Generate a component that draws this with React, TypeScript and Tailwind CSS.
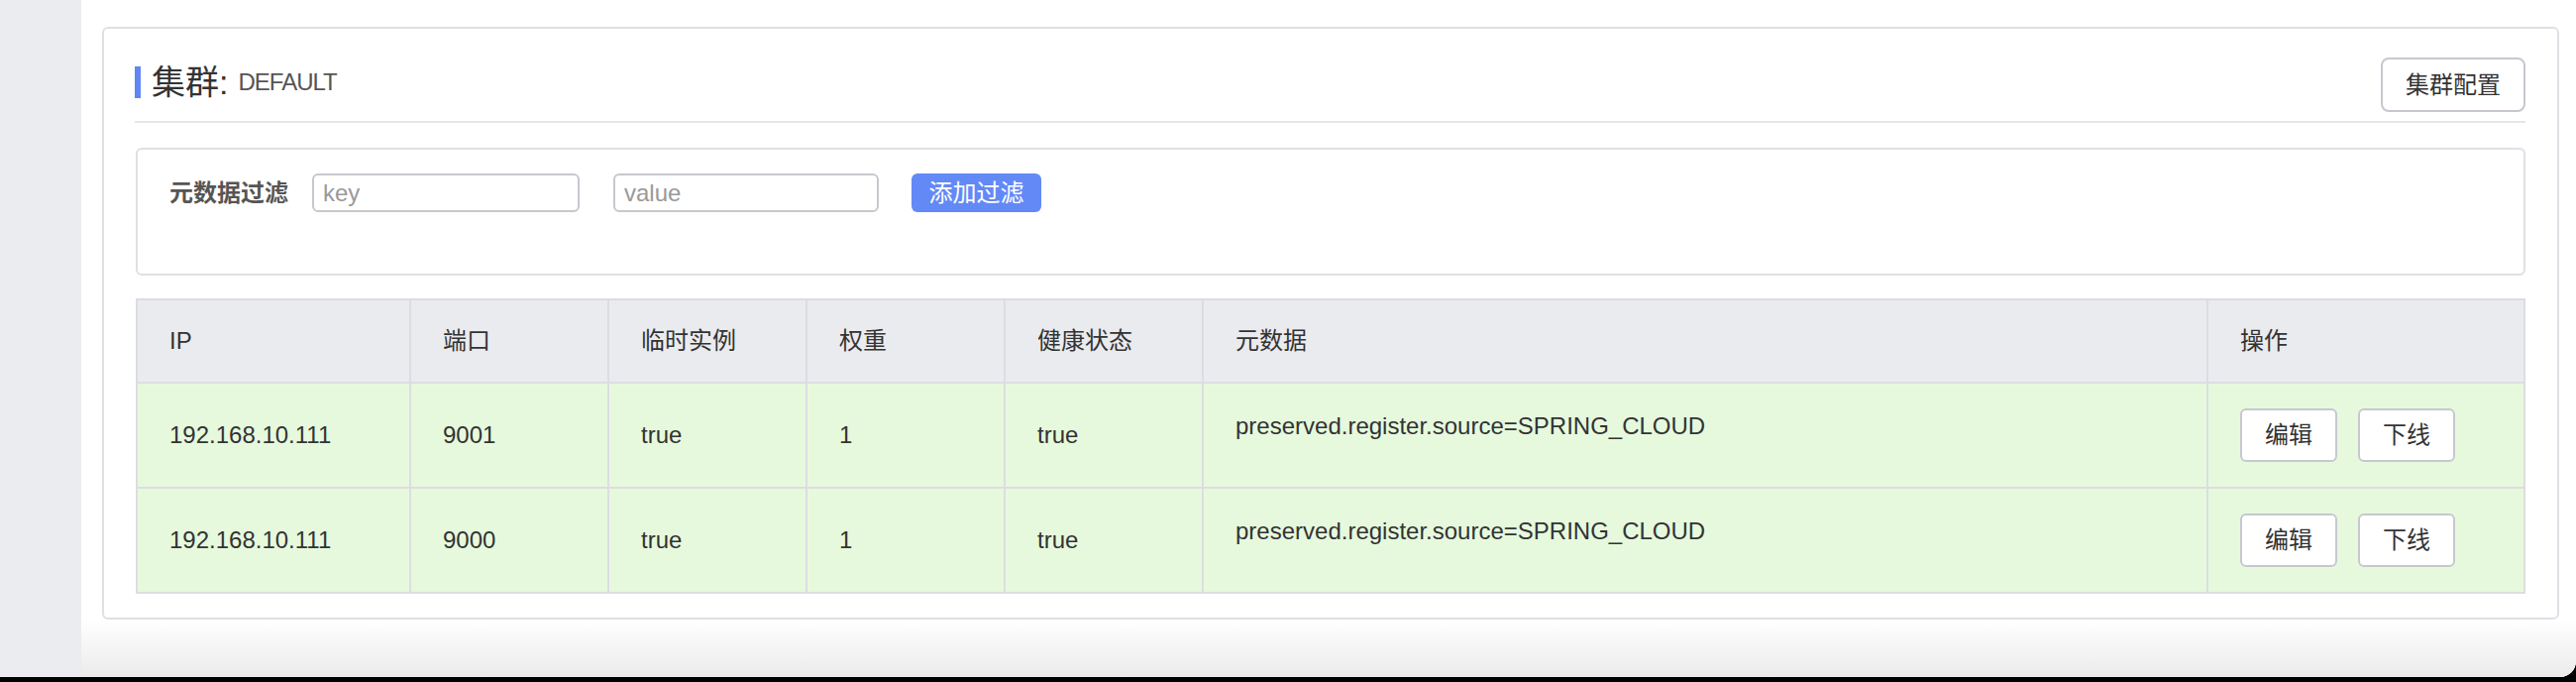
import React from "react";

const font = { fontFamily: '"Liberation Sans", "Noto Sans CJK SC", sans-serif' };

const columns = [
  { title: "IP", width: "w-[276px]" },
  { title: "端口", width: "w-[200px]" },
  { title: "临时实例", width: "w-[200px]" },
  { title: "权重", width: "w-[200px]" },
  { title: "健康状态", width: "w-[200px]" },
  { title: "元数据", width: "w-[1014px]" },
  { title: "操作", width: "w-[320px]" },
];

const instances = [
  { ip: "192.168.10.111", port: "9001", ephemeral: "true", weight: "1", healthy: "true", metadata: "preserved.register.source=SPRING_CLOUD" },
  { ip: "192.168.10.111", port: "9000", ephemeral: "true", weight: "1", healthy: "true", metadata: "preserved.register.source=SPRING_CLOUD" },
];

function OpButton({ children }: { children: React.ReactNode }) {
  return (
    <button className="w-[98px] h-[54px] border-2 border-[#c6c8cf] rounded-[6px] bg-white text-[24px] text-[#333]">
      {children}
    </button>
  );
}

export default function App() {
  return (
    <div className="h-[688px] bg-black" style={font}>
      <div className="h-[683px] flex bg-white rounded-br-[16px] overflow-hidden">
        <aside className="w-[82px] shrink-0 bg-[#ebecf0]" />
        <main className="flex-1 flex flex-col">
          <div className="pt-[27px] pl-[21px] pr-[19px]">
            <div className="border-2 border-[#dfe0e5] rounded-[6px] px-[32px] pt-[29px] pb-[24px]">
              {/* header */}
              <div className="flex justify-between items-start">
                <div className="flex items-center h-[32px] mt-[9px]">
                  <span className="w-[6px] h-[32px] bg-[#6086f6] mr-[11px] -ml-[1px]" />
                  <span className="text-[34px] leading-none text-[#333]">集群:</span>
                  <span className="ml-[10px] text-[24px] tracking-[-1px] text-[#555]">DEFAULT</span>
                </div>
                <button className="w-[146px] h-[55px] border-2 border-[#c6c8cf] rounded-[8px] bg-white text-[24px] text-[#333]">
                  集群配置
                </button>
              </div>
              <div className="h-[2px] bg-[#e6e7eb] mt-[9px] -ml-[1px]" />

              {/* filter */}
              <div className="mt-[25px] h-[129px] border-2 border-[#dfe0e5] rounded-[6px] pt-[24px] pl-[32px]">
                <div className="flex items-center">
                  <span className="text-[24px] font-bold text-[#555]">元数据过滤</span>
                  <input
                    placeholder="key"
                    className="ml-[24px] w-[270px] h-[39px] border-2 border-[#c6c8cf] rounded-[6px] px-[9px] text-[24px] text-[#333] placeholder:text-[#999] outline-none"
                  />
                  <input
                    placeholder="value"
                    className="ml-[34px] w-[268px] h-[39px] border-2 border-[#c6c8cf] rounded-[6px] px-[9px] text-[24px] text-[#333] placeholder:text-[#999] outline-none"
                  />
                  <button className="ml-[33px] w-[131px] h-[39px] rounded-[6px] bg-[#6389f7] text-white text-[24px]">
                    添加过滤
                  </button>
                </div>
              </div>

              {/* table */}
              <table className="mt-[23px] w-full table-fixed border-collapse border-2 border-[#dcdde2] text-[24px] text-[#333]">
                <colgroup>
                  {columns.map((c) => (
                    <col key={c.title} className={c.width} />
                  ))}
                </colgroup>
                <thead>
                  <tr className="bg-[#eaebef] h-[84px]">
                    {columns.map((c) => (
                      <th key={c.title} className="border-2 border-[#dcdde2] pl-[32px] text-left font-normal align-middle">
                        {c.title}
                      </th>
                    ))}
                  </tr>
                </thead>
                <tbody>
                  {instances.map((row, i) => (
                    <tr key={i} className="bg-[#e6f9dd] h-[106px]">
                      <td className="border-2 border-[#dcdde2] pl-[32px]">{row.ip}</td>
                      <td className="border-2 border-[#dcdde2] pl-[32px]">{row.port}</td>
                      <td className="border-2 border-[#dcdde2] pl-[32px]">{row.ephemeral}</td>
                      <td className="border-2 border-[#dcdde2] pl-[32px]">{row.weight}</td>
                      <td className="border-2 border-[#dcdde2] pl-[32px]">{row.healthy}</td>
                      <td className="border-2 border-[#dcdde2] pl-[32px]">
                        <div className="pb-[18px]">{row.metadata}</div>
                      </td>
                      <td className="border-2 border-[#dcdde2] pl-[32px]">
                        <div className="flex gap-[21px]">
                          <OpButton>编辑</OpButton>
                          <OpButton>下线</OpButton>
                        </div>
                      </td>
                    </tr>
                  ))}
                </tbody>
              </table>
            </div>
          </div>
          <div className="flex-1 bg-linear-to-b from-white to-[#ebebeb]" />
        </main>
      </div>
    </div>
  );
}
